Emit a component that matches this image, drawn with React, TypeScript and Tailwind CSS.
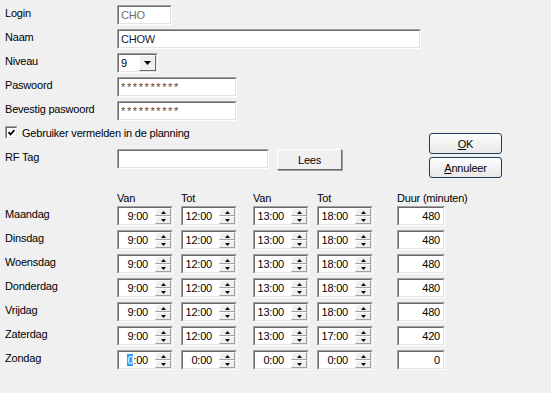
import React from "react";

const days = [
  { name: "Maandag", t: ["9:00", "12:00", "13:00", "18:00"], duur: "480" },
  { name: "Dinsdag", t: ["9:00", "12:00", "13:00", "18:00"], duur: "480" },
  { name: "Woensdag", t: ["9:00", "12:00", "13:00", "18:00"], duur: "480" },
  { name: "Donderdag", t: ["9:00", "12:00", "13:00", "18:00"], duur: "480" },
  { name: "Vrijdag", t: ["9:00", "12:00", "13:00", "18:00"], duur: "480" },
  { name: "Zaterdag", t: ["9:00", "12:00", "13:00", "17:00"], duur: "420" },
  { name: "Zondag", t: ["0:00", "0:00", "0:00", "0:00"], duur: "0" },
];

function Sunken({ className = "", inner = "", children }: { className?: string; inner?: string; children?: React.ReactNode }) {
  return (
    <div className={`border border-t-[#a0a0a0] border-l-[#a0a0a0] border-r-white border-b-white ${className}`}>
      <div className={`h-full w-full border border-t-[#696969] border-l-[#696969] border-r-[#e3e3e3] border-b-[#e3e3e3] bg-white flex items-center leading-[14px] ${inner}`}>
        {children}
      </div>
    </div>
  );
}

function SpinHalf({ up }: { up?: boolean }) {
  return (
    <div className="flex-1 flex items-center justify-center border border-t-white border-l-white border-r-[#a0a0a0] border-b-[#a0a0a0] bg-[#f0f0f0]">
      <svg width="5" height="3" viewBox="0 0 5 3">
        {up ? <path d="M2.5 0 L5 3 L0 3 Z" fill="#000" /> : <path d="M0 0 L5 0 L2.5 3 Z" fill="#000" />}
      </svg>
    </div>
  );
}

function Spinner({ value, selected }: { value: string; selected?: boolean }) {
  return (
    <Sunken className="w-[56px] h-[20px]">
      <div className="flex-1 text-right pr-[7px]">
        {selected ? (
          <>
            <span className="bg-[#3399ff] text-white">{value[0]}</span>
            {value.slice(1)}
          </>
        ) : (
          value
        )}
      </div>
      <div className="w-[16px] h-full flex flex-col">
        <SpinHalf up />
        <SpinHalf />
      </div>
    </Sunken>
  );
}

function Row({ label, children, className = "" }: { label: string; children: React.ReactNode; className?: string }) {
  return (
    <div className={`flex h-[20px] ${className}`}>
      <div className="w-[112px] leading-[14px] pt-[1px]">{label}</div>
      {children}
    </div>
  );
}

function XpButton({ mn, rest }: { mn: string; rest: string }) {
  return (
    <div className="w-[73px] h-[21px] rounded-[3px] border border-[#1e3d62] bg-gradient-to-b from-[#fdfdfd] to-[#e8e8e8] flex items-center justify-center leading-[14px]">
      <span>
        <span className="underline">{mn}</span>
        {rest}
      </span>
    </div>
  );
}

export default function App() {
  return (
    <div className="w-[551px] h-[393px] bg-[#f0f0f0] text-[11px] tracking-[-0.2px] text-black overflow-hidden font-['Liberation_Sans',Arial,sans-serif]">
      {/* top form */}
      <div className="flex pl-[5px] pt-[5px]">
        <div className="w-[424px] flex flex-col">
          <Row label="Login">
            <Sunken className="w-[55px] h-[20px]" inner="pl-[2px] text-[#6d6d6d]">CHO</Sunken>
          </Row>
          <Row label="Naam" className="mt-[4px]">
            <Sunken className="w-[304px] h-[20px]" inner="pl-[2px] text-[#1a1a40]">CHOW</Sunken>
          </Row>
          <Row label="Niveau" className="mt-[4px]">
            <Sunken className="w-[41px] h-[20px]" inner="pl-[2px] justify-between">
              <span>9</span>
              <div className="w-[17px] h-full flex items-center justify-center border border-t-white border-l-white border-r-[#696969] border-b-[#696969] bg-[#f0f0f0]">
                <svg width="7" height="4" viewBox="0 0 7 4">
                  <path d="M0 0 L7 0 L3.5 4 Z" fill="#000" />
                </svg>
              </div>
            </Sunken>
          </Row>
          <Row label="Paswoord" className="mt-[4px]">
            <Sunken className="w-[120px] h-[20px]" inner="pl-[2px] text-[#6b3a1f] tracking-[1.6px]">**********</Sunken>
          </Row>
          <Row label="Bevestig paswoord" className="mt-[4px]">
            <Sunken className="w-[120px] h-[20px]" inner="pl-[2px] text-[#6b3a1f] tracking-[1.6px]">**********</Sunken>
          </Row>
          <div className="flex items-center h-[13px] mt-[5px]">
            <Sunken className="w-[13px] h-[13px]" inner="justify-center">
              <svg width="7" height="7" viewBox="0 0 7 7">
                <path d="M0.5 3.2 L2.6 5.4 L6.5 1" stroke="#000" strokeWidth="1.8" fill="none" />
              </svg>
            </Sunken>
            <span className="ml-[4px] leading-[14px]">Gebruiker vermelden in de planning</span>
          </div>
          <Row label="RF Tag" className="mt-[10px]">
            <Sunken className="w-[152px] h-[20px]" />
            <div className="ml-[8px] w-[65px] h-[21px] border border-t-white border-l-white border-r-[#696969] border-b-[#696969] bg-[#f0f0f0] flex items-center justify-center leading-[14px] shadow-[1px_1px_0_#a0a0a0]">
              Lees
            </div>
          </Row>
        </div>
        <div className="flex flex-col gap-[3px] pt-[128px]">
          <XpButton mn="O" rest="K" />
          <XpButton mn="A" rest="nnuleer" />
        </div>
      </div>

      {/* schedule */}
      <div className="pl-[5px] mt-[12px]">
        <div className="flex h-[14px] leading-[14px] pt-[1px]">
          <div className="w-[112px]" />
          <div className="w-[56px]">Van</div>
          <div className="w-[56px] ml-[8px]">Tot</div>
          <div className="w-[56px] ml-[16px]">Van</div>
          <div className="w-[56px] ml-[8px]">Tot</div>
          <div className="ml-[24px]">Duur (minuten)</div>
        </div>
        <div className="flex flex-col gap-[4px] mt-[2px]">
          {days.map((d, i) => (
            <div key={d.name} className="flex h-[20px]">
              <div className="w-[112px] leading-[14px] pt-[1px]">{d.name}</div>
              <Spinner value={d.t[0]} selected={i === 6} />
              <div className="ml-[8px]">
                <Spinner value={d.t[1]} />
              </div>
              <div className="ml-[16px]">
                <Spinner value={d.t[2]} />
              </div>
              <div className="ml-[8px]">
                <Spinner value={d.t[3]} />
              </div>
              <Sunken className="ml-[24px] w-[48px] h-[20px]" inner="justify-end pr-[3px]">
                {d.duur}
              </Sunken>
            </div>
          ))}
        </div>
      </div>
    </div>
  );
}
